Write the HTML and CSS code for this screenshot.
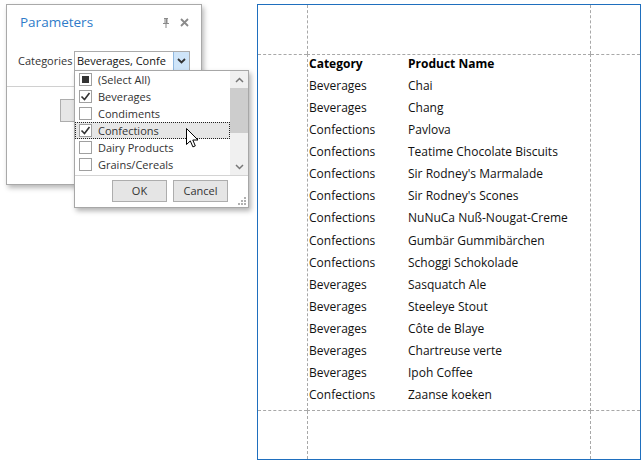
FILE: index.html
```html
<!DOCTYPE html>
<html>
<head>
<meta charset="utf-8">
<link rel="stylesheet" href="styles.css">
</head>
<body>
<div class="stage">
  <div class="left">
    <div class="params">
      <div class="params-head">
        <span class="params-title">Parameters</span>
        <span class="head-icons">
          <svg class="pin" width="8" height="10" viewBox="0 0 8 10"><path d="M2 0h4v1H5.5v4H7v1H4.5v4h-1V6H1V5h1.5V1H2z" fill="#8a8a8a"/><rect x="3" y="1" width="1" height="4" fill="#b8b8b8"/></svg>
          <svg class="close" width="9" height="9" viewBox="0 0 9 9"><path d="M1 1l7 7M8 1L1 8" stroke="#8a8a8a" stroke-width="1.8"/></svg>
        </span>
      </div>
      <div class="param-row">
        <span class="param-label">Categories</span>
        <div class="combo">
          <span class="combo-text">Beverages, Confe</span>
          <span class="combo-btn"><svg width="9" height="6" viewBox="0 0 9 6"><path d="M1 1l3.5 3.5L8 1" fill="none" stroke="#333" stroke-width="1.8"/></svg></span>
        </div>
      </div>
      <div class="params-foot">
        <div class="submit"></div>
      </div>
    </div>

    <div class="popup">
      <div class="popup-body">
        <div class="list">
          <div class="item"><span class="cb"><span class="ind"></span></span><span>(Select All)</span></div>
          <div class="item"><span class="cb"><svg width="11" height="11" viewBox="0 0 11 11"><path d="M1.5 5.5l3 3 5-6.5" fill="none" stroke="#333" stroke-width="1.6"/></svg></span><span>Beverages</span></div>
          <div class="item"><span class="cb"></span><span>Condiments</span></div>
          <div class="item item-hot"><span class="cb"><svg width="11" height="11" viewBox="0 0 11 11"><path d="M1.5 5.5l3 3 5-6.5" fill="none" stroke="#333" stroke-width="1.6"/></svg></span><span>Confections</span></div>
          <div class="item"><span class="cb"></span><span>Dairy Products</span></div>
          <div class="item"><span class="cb"></span><span>Grains/Cereals</span></div>
        </div>
        <div class="scroll">
          <span class="arrow"><svg width="9" height="6" viewBox="0 0 9 6"><path d="M1 5l3.5-3.5L8 5" fill="none" stroke="#777" stroke-width="1.5"/></svg></span>
          <span class="track"><span class="thumb"></span></span>
          <span class="arrow"><svg width="9" height="6" viewBox="0 0 9 6"><path d="M1 1l3.5 3.5L8 1" fill="none" stroke="#777" stroke-width="1.5"/></svg></span>
        </div>
      </div>
      <div class="popup-foot">
        <div class="btn btn-ok">OK</div>
        <div class="btn btn-cancel">Cancel</div>
        <svg class="grip" width="8" height="8" viewBox="0 0 8 8" fill="#b0b0b0"><rect x="6" y="0" width="2" height="2"/><rect x="3" y="3" width="2" height="2"/><rect x="6" y="3" width="2" height="2"/><rect x="0" y="6" width="2" height="2"/><rect x="3" y="6" width="2" height="2"/><rect x="6" y="6" width="2" height="2"/></svg>
      </div>
    </div>

    <svg class="cursor" width="13" height="21" viewBox="0 0 13 21"><path d="M0.5 0.5v16l3.8-3.6 2.6 6 2.4-1-2.5-5.9h5.2z" fill="#fff" stroke="#000" stroke-width="1" stroke-linejoin="round"/></svg>
  </div>

  <div class="page">
    <div class="cell"></div>
    <div class="cell c-mid"></div>
    <div class="cell"></div>
    <div class="cell r-mid"></div>
    <div class="cell c-mid r-mid">
      <div class="table">
        <div class="tr th"><span class="td1">Category</span><span>Product Name</span></div>
        <div class="tr"><span class="td1">Beverages</span><span>Chai</span></div>
        <div class="tr"><span class="td1">Beverages</span><span>Chang</span></div>
        <div class="tr"><span class="td1">Confections</span><span>Pavlova</span></div>
        <div class="tr"><span class="td1">Confections</span><span>Teatime Chocolate Biscuits</span></div>
        <div class="tr"><span class="td1">Confections</span><span>Sir Rodney's Marmalade</span></div>
        <div class="tr"><span class="td1">Confections</span><span>Sir Rodney's Scones</span></div>
        <div class="tr"><span class="td1">Confections</span><span>NuNuCa Nuß-Nougat-Creme</span></div>
        <div class="tr"><span class="td1">Confections</span><span>Gumbär Gummibärchen</span></div>
        <div class="tr"><span class="td1">Confections</span><span>Schoggi Schokolade</span></div>
        <div class="tr"><span class="td1">Beverages</span><span>Sasquatch Ale</span></div>
        <div class="tr"><span class="td1">Beverages</span><span>Steeleye Stout</span></div>
        <div class="tr"><span class="td1">Beverages</span><span>Côte de Blaye</span></div>
        <div class="tr"><span class="td1">Beverages</span><span>Chartreuse verte</span></div>
        <div class="tr"><span class="td1">Beverages</span><span>Ipoh Coffee</span></div>
        <div class="tr"><span class="td1">Confections</span><span>Zaanse koeken</span></div>
      </div>
    </div>
    <div class="cell r-mid"></div>
    <div class="cell"></div>
    <div class="cell c-mid"></div>
    <div class="cell"></div>
  </div>
</div>
</body>
</html>
```

FILE: styles.css
```css
* { box-sizing: border-box; }
html, body { margin: 0; padding: 0; background: #fff; }
body {
  font-family: "Open Sans", "Noto Sans", sans-serif;
  font-size: 11px;
  color: #333;
  width: 641px;
  height: 460px;
  overflow: hidden;
}
.stage {
  display: flex;
  padding-top: 4px;
}
.left {
  position: relative;
  width: 257px;
  height: 456px;
  flex: none;
}

/* Parameters panel */
.params {
  margin-left: 6px;
  width: 196px;
  height: 181px;
  border: 1px solid #a9a9a9;
  background: #fff;
  box-shadow: 2px 3px 5px rgba(0,0,0,0.28);
  display: flex;
  flex-direction: column;
}
.params-head {
  display: flex;
  align-items: center;
  justify-content: space-between;
  height: 35px;
  padding: 0 12px 0 13px;
}
.params-title {
  color: #2f7bc9;
  font-size: 13.5px;
  padding-bottom: 1px;
}
.head-icons {
  display: flex;
  align-items: center;
  gap: 10px;
}
.pin { margin-top: 1px; }
.param-row {
  display: flex;
  padding: 11px 0 0 11px;
  height: 46px;
  align-items: flex-start;
}
.param-label {
  margin-top: 2px;
  width: 56px;
  color: #333;
}
.combo {
  width: 116px;
  height: 20px;
  border: 1px solid #ababab;
  display: flex;
  background: #fff;
}
.combo-text {
  flex: 1;
  padding-left: 2px;
  line-height: 17px;
  color: #111;
  overflow: hidden;
  white-space: nowrap;
}
.combo-btn {
  width: 16px;
  height: 18px;
  background: #cfe5f9;
  border-left: 1px solid #8fb8e0;
  display: flex;
  align-items: center;
  justify-content: center;
}
.params-foot {
  border-top: 1px solid #d0d0d0;
  flex: 1;
  padding: 12px 0 0 53px;
}
.submit {
  width: 80px;
  height: 23px;
  background: #e6e6e6;
  border: 1px solid #adadad;
}

/* popup */
.popup {
  position: absolute;
  left: 74px;
  top: 66px;
  width: 175px;
  height: 138px;
  background: #fff;
  border: 1px solid #a7a7a7;
  box-shadow: 2px 3px 5px rgba(0,0,0,0.3);
  display: flex;
  flex-direction: column;
}
.popup-body {
  display: flex;
  height: 104px;
}
.list {
  flex: 1;
}
.item {
  height: 17px;
  display: flex;
  align-items: center;
  gap: 6px;
  padding-left: 3px;
  border: 1px solid transparent;
  color: #333;
}
.item-hot {
  background: #e6e6e6;
  border: 1px dotted #222;
}
.cb {
  width: 13px;
  height: 13px;
  border: 1px solid #a0a0a0;
  background: #fff;
  display: flex;
  align-items: center;
  justify-content: center;
  flex: none;
}
.ind {
  width: 7px;
  height: 7px;
  background: #333;
}
.scroll {
  width: 18px;
  background: #f0f0f0;
  display: flex;
  flex-direction: column;
}
.arrow {
  height: 17px;
  display: flex;
  align-items: center;
  justify-content: center;
}
.track {
  flex: 1;
  display: flex;
  flex-direction: column;
}
.thumb {
  height: 45px;
  background: #cdcdcd;
}
.popup-foot {
  border-top: 1px solid #d4d4d4;
  flex: 1;
  position: relative;
  display: flex;
  gap: 6px;
  padding: 4px 0 0 37px;
}
.btn {
  width: 55px;
  height: 22px;
  background: #e5e5e5;
  border: 1px solid #adadad;
  text-align: center;
  line-height: 20px;
  color: #333;
}
.grip {
  position: absolute;
  right: 2px;
  bottom: 2px;
}
.cursor {
  position: absolute;
  left: 186px;
  top: 124px;
}

/* report page */
.page {
  width: 384px;
  height: 456px;
  border: 1px solid #1f6fbe;
  display: grid;
  grid-template-columns: 49px 284px 1fr;
  grid-template-rows: 49px 357px 1fr;
  flex: none;
}
.cell { min-width: 0; }
.c-mid {
  border-left: 1px dashed #a8a8a8;
  border-right: 1px dashed #a8a8a8;
}
.r-mid {
  border-top: 1px dashed #a8a8a8;
  border-bottom: 1px dashed #a8a8a8;
}
.table {
  padding: 1px 0 0 1px;
  color: #111;
  font-size: 12px;
}
.tr {
  display: flex;
  height: 22.07px;
  line-height: 16px;
  white-space: nowrap;
}
.td1 {
  width: 99px;
  flex: none;
}
.th { font-weight: 700; color: #000; }
```
